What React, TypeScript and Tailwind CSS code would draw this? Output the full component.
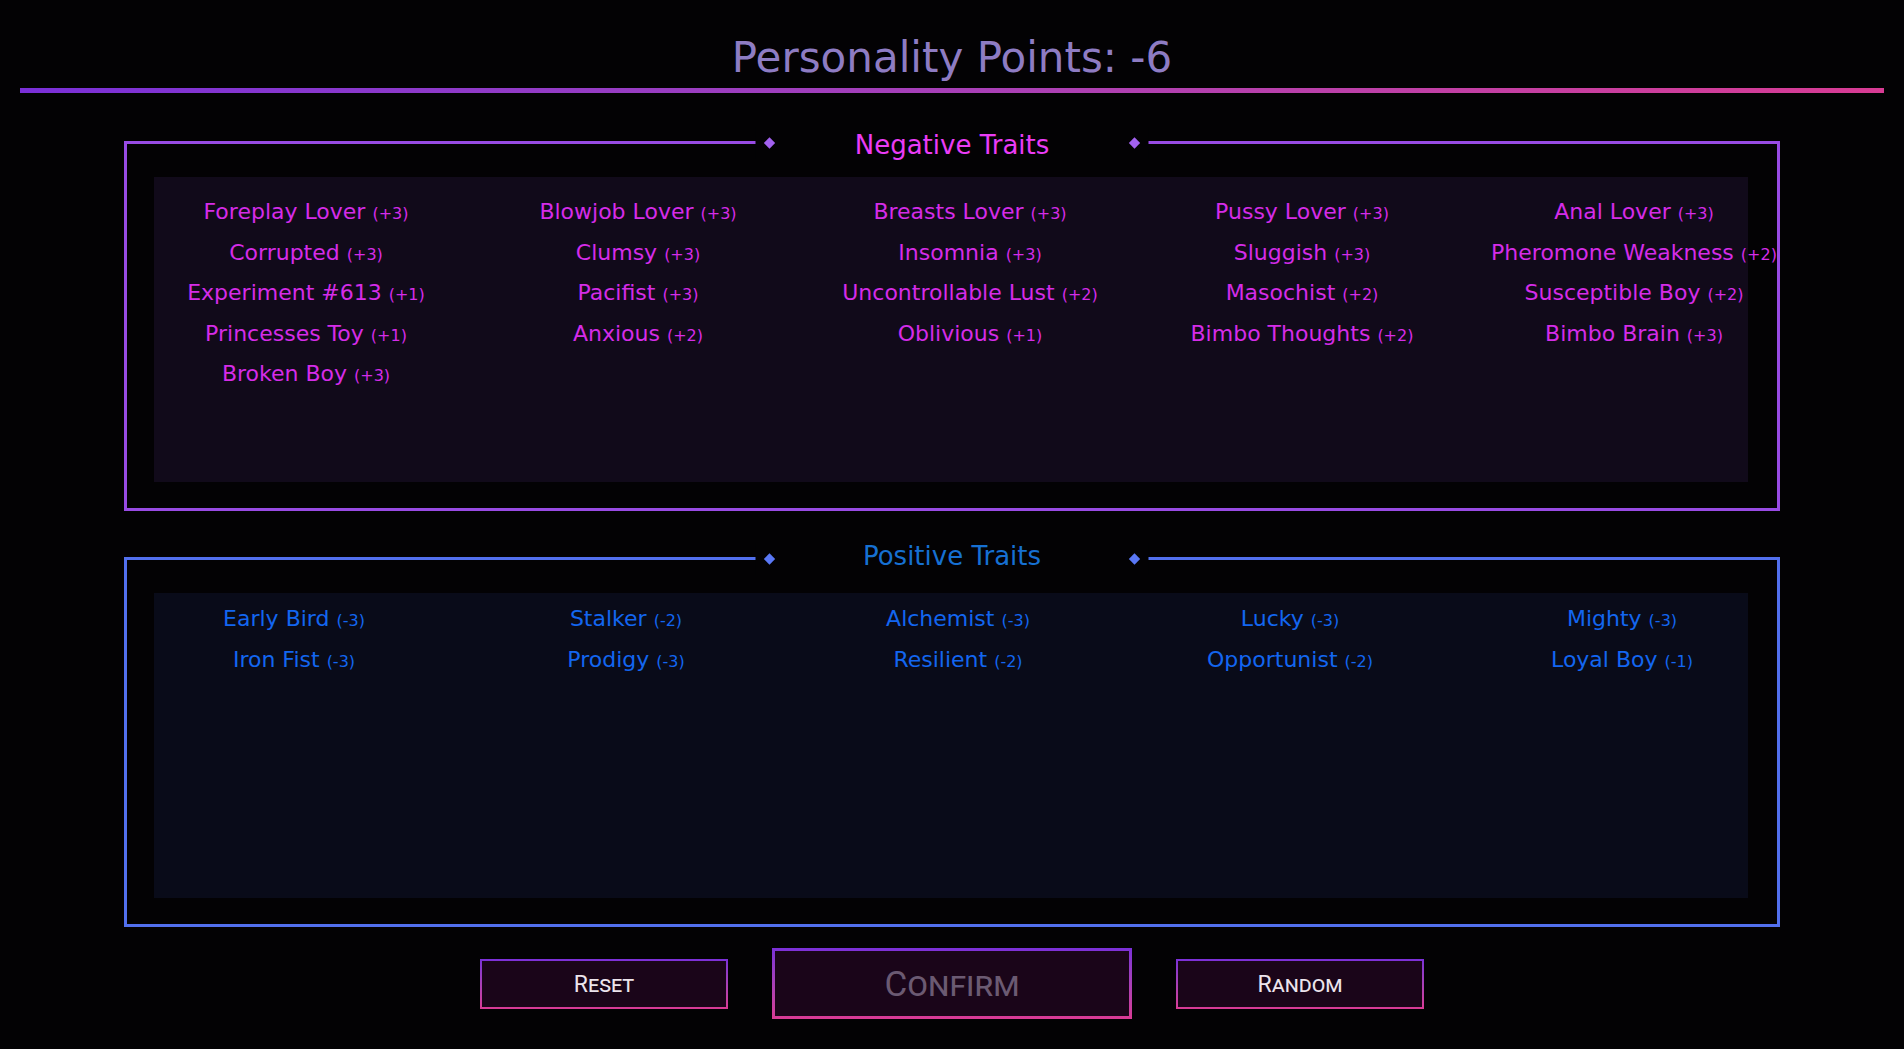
import React from 'react';

type Trait = { name: string; cost: string };

const negativeTraits: Trait[] = [
  { name: 'Foreplay Lover', cost: '(+3)' },
  { name: 'Blowjob Lover', cost: '(+3)' },
  { name: 'Breasts Lover', cost: '(+3)' },
  { name: 'Pussy Lover', cost: '(+3)' },
  { name: 'Anal Lover', cost: '(+3)' },
  { name: 'Corrupted', cost: '(+3)' },
  { name: 'Clumsy', cost: '(+3)' },
  { name: 'Insomnia', cost: '(+3)' },
  { name: 'Sluggish', cost: '(+3)' },
  { name: 'Pheromone Weakness', cost: '(+2)' },
  { name: 'Experiment #613', cost: '(+1)' },
  { name: 'Pacifist', cost: '(+3)' },
  { name: 'Uncontrollable Lust', cost: '(+2)' },
  { name: 'Masochist', cost: '(+2)' },
  { name: 'Susceptible Boy', cost: '(+2)' },
  { name: 'Princesses Toy', cost: '(+1)' },
  { name: 'Anxious', cost: '(+2)' },
  { name: 'Oblivious', cost: '(+1)' },
  { name: 'Bimbo Thoughts', cost: '(+2)' },
  { name: 'Bimbo Brain', cost: '(+3)' },
  { name: 'Broken Boy', cost: '(+3)' },
];

const positiveTraits: Trait[] = [
  { name: 'Early Bird', cost: '(-3)' },
  { name: 'Stalker', cost: '(-2)' },
  { name: 'Alchemist', cost: '(-3)' },
  { name: 'Lucky', cost: '(-3)' },
  { name: 'Mighty', cost: '(-3)' },
  { name: 'Iron Fist', cost: '(-3)' },
  { name: 'Prodigy', cost: '(-3)' },
  { name: 'Resilient', cost: '(-2)' },
  { name: 'Opportunist', cost: '(-2)' },
  { name: 'Loyal Boy', cost: '(-1)' },
];

function Diamond({ color }: { color: string }) {
  return (
    <div className="w-[12px] h-[12px] flex items-center justify-center">
      <div className={`w-[8px] h-[8px] rotate-45 ${color}`} />
    </div>
  );
}

function TraitBox({
  title,
  traits,
  positive,
}: {
  title: string;
  traits: Trait[];
  positive?: boolean;
}) {
  return (
    <div
      className={`relative w-[1656px] h-[370px] mx-auto border-[3px] pl-[27px] pr-[29px] pt-[33px] pb-[26px] ${
        positive ? 'border-[#5270ef]' : 'border-[#984be4]'
      }`}
    >
      {/* Title over the top border */}
      <div className="absolute left-1/2 top-[-1.5px] -translate-x-1/2 -translate-y-1/2 w-[393px] px-[8px] bg-[#030204] flex items-center justify-between">
        <Diamond color={positive ? 'bg-[#5a78f6]' : 'bg-[#a261ef]'} />
        <span
          className={`relative text-[26px] leading-[32px] ${
            positive ? 'text-[#1670d2] -top-[3px]' : 'text-[#ea3cf6] top-[2px]'
          }`}
        >
          {title}
        </span>
        <Diamond color={positive ? 'bg-[#5a78f6]' : 'bg-[#a261ef]'} />
      </div>

      {/* List */}
      <div
        className={`h-[305px] ${positive ? 'bg-[#090b19] pt-[6px]' : 'bg-[#110a1a] pt-[15px]'}`}
      >
        <div
          className={`grid grid-cols-[repeat(5,332px)] text-center whitespace-nowrap ${
            positive ? '-ml-[26px] text-[#1366f0]' : '-ml-[14px] text-[#d52ce8]'
          }`}
        >
          {traits.map((t) => (
            <div key={t.name} className="text-[22px] leading-[40.6px]">
              {t.name} <span className="text-[16px] leading-none">{t.cost}</span>
            </div>
          ))}
        </div>
      </div>
    </div>
  );
}

function GameButton({
  label,
  big,
}: {
  label: string;
  big?: boolean;
}) {
  return (
    <div
      className={`bg-linear-to-b from-[#7b2fd8] to-[#d93a94] ${
        big ? 'w-[360px] h-[71px] p-[3px]' : 'w-[248px] h-[50px] p-[2px]'
      }`}
    >
      <button
        type="button"
        className={`w-full h-full bg-[#1a0519] flex items-center justify-center pt-[3px] [font-variant:small-caps] font-['Roboto',sans-serif] ${
          big ? 'text-[35px] text-[#6b5a72]' : 'text-[23px] text-[#ece4ec]'
        }`}
      >
        {label}
      </button>
    </div>
  );
}

export default function App() {
  return (
    <div className="w-full min-h-[1049px] bg-[#030204] font-['DejaVu_Sans',sans-serif] overflow-hidden">
      {/* Header */}
      <div className="pt-[33px] text-center text-[42px] leading-[49px] text-[#8e7cc3]">
        Personality Points: -6
      </div>
      <div className="mx-[20px] mt-[6px] h-[5px] bg-linear-to-r from-[#7a2fd8] to-[#d83b94]" />

      {/* Trait boxes */}
      <div className="mt-[48px]">
        <TraitBox title="Negative Traits" traits={negativeTraits} />
      </div>
      <div className="mt-[46px]">
        <TraitBox title="Positive Traits" traits={positiveTraits} positive />
      </div>

      {/* Buttons */}
      <div className="mt-[21px] flex items-center justify-center gap-[44px]">
        <GameButton label="Reset" />
        <GameButton label="Confirm" big />
        <GameButton label="Random" />
      </div>
    </div>
  );
}
